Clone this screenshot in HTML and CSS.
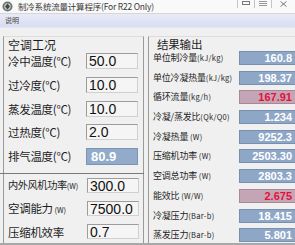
FILE: index.html
```html
<!DOCTYPE html>
<html>
<head>
  <meta charset="utf-8">
  <title>制冷系统流量计算程序</title>
  <link rel="stylesheet" href="styles.css">
</head>
<body>
  <div class="window">
    <header class="titlebar">
      <svg class="appicon" width="11" height="11" viewBox="0 0 11 11">
        <circle cx="5.5" cy="5.5" r="5" fill="#6c7670"/>
        <circle cx="5.5" cy="5.5" r="3.2" fill="#c9d0cc"/>
        <path d="M3 5.5 L5.5 2.5 L8 5.5 L5.5 8.5 Z" fill="#3f4a44"/>
      </svg>
      <span class="title">制冷系统流量计算程序(For R22 Only)</span>
      <div class="controls">
        <span class="ctl"><svg width="8" height="4" viewBox="0 0 8 4"><rect x="0.5" y="0.5" width="7" height="3" fill="none" stroke="#777"/></svg></span>
        <span class="ctl"><svg width="8" height="6" viewBox="0 0 8 6"><path d="M0 0.5H8M0 2.5H8M0 4.5H8" stroke="#999"/></svg></span>
        <span class="ctl close"><svg width="7" height="6" viewBox="0 0 7 6"><path d="M0.5 0.5L6.5 5.5M6.5 0.5L0.5 5.5" stroke="#777"/></svg></span>
      </div>
    </header>
    <nav class="menubar"><span>说明</span></nav>

    <main class="content">
      <div class="leftcol">
        <section class="group cond">
          <h2 class="caption">空调工况</h2>
          <div class="rows">
            <label>冷中温度(℃)</label><div class="input">50.0</div>
            <label>过冷度(℃)</label><div class="input">10.0</div>
            <label>蒸发温度(℃)</label><div class="input">10.0</div>
            <label>过热度(℃)</label><div class="input">2.0</div>
            <label>排气温度(℃)</label><div class="input calc">80.9</div>
          </div>
        </section>
        <section class="group params">
          <div class="rows">
            <label class="tight">内外风机功率<small>(W)</small></label><div class="input">300.0</div>
            <label>空调能力<small> (W)</small></label><div class="input">7500.0</div>
            <label>压缩机效率</label><div class="input">0.7</div>
          </div>
        </section>
      </div>

      <section class="group results">
        <h2 class="caption">结果输出</h2>
        <div class="outrows">
          <label>单位制冷量<small>(kJ/kg)</small></label><div class="out">160.8</div>
          <label>单位冷凝热量<small>(kJ/kg)</small></label><div class="out">198.37</div>
          <label>循环流量<small>(kg/h)</small></label><div class="out warn">167.91</div>
          <label>冷凝/蒸发比<small>(Qk/Q0)</small></label><div class="out">1.234</div>
          <label>冷凝热量 <small>(W)</small></label><div class="out">9252.3</div>
          <label>压缩机功率 <small>(W)</small></label><div class="out">2503.30</div>
          <label>空调总功率 <small>(W)</small></label><div class="out">2803.3</div>
          <label>能效比 <small>(W/W)</small></label><div class="out warn">2.675</div>
          <label>冷凝压力<small>(Bar-b)</small></label><div class="out">18.415</div>
          <label>蒸发压力<small>(Bar-b)</small></label><div class="out">5.801</div>
        </div>
      </section>
    </main>
  </div>
</body>
</html>
```

FILE: styles.css
```css
html, body {
  margin: 0;
  padding: 0;
}
body {
  width: 295px;
  height: 245px;
  overflow: hidden;
  background: #f0f0f0;
  font-family: "Noto Sans CJK SC", "Liberation Sans", sans-serif;
  color: #1e1e1e;
}
.window {
  height: 245px;
  display: flex;
  flex-direction: column;
  border-bottom: 2px solid #a8a8a8;
  box-sizing: border-box;
}

/* title bar */
.titlebar {
  height: 13px;
  display: flex;
  align-items: center;
  background: #f9f9f9;
  border-bottom: 1px solid #d6d6d6;
}
.appicon {
  margin: 0 5px 0 2px;
  flex: none;
}
.title {
  font-size: 8.5px;
  line-height: 13px;
  color: #3a3a3a;
  white-space: nowrap;
  letter-spacing: -0.2px;
}
.controls {
  margin-left: auto;
  display: flex;
  align-self: flex-start;
  height: 8px;
}
.ctl {
  display: flex;
  align-items: flex-start;
  justify-content: center;
  padding-top: 1px;
  width: 16px;
  border-left: 1px solid #c4c4c4;
}
.ctl.close {
  width: 23px;
}

/* menu */
.menubar {
  height: 13px;
  background: linear-gradient(#e8eaf7, #d9ddf1);
  border-bottom: 1px solid #e4e6f2;
  font-size: 7px;
  line-height: 13px;
  padding-left: 5px;
  color: #444;
}

/* layout */
.content {
  flex: 1;
  display: flex;
  gap: 4px;
  padding-top: 8px;
  min-height: 0;
}
.leftcol {
  width: 144px;
  display: flex;
  flex-direction: column;
}
.group {
  box-sizing: border-box;
}
.caption {
  margin: 0;
  font-weight: normal;
  font-size: 12px;
  line-height: 14px;
  height: 14px;
}

/* left groups */
.cond {
  height: 137px;
  margin-left: 3px;
  border-left: 1px solid #9a9a9a;
  border-right: 1px solid #9a9a9a;
  border-top: 1px solid #dcdcdc;
  padding: 1px 0 0 4px;
}
.cond .rows {
  row-gap: 7.8px;
  margin-top: 1px;
}
.params {
  flex: 1;
  border-top: 1px solid #7a7a7a;
  padding: 4px 0 0 8px;
  background: linear-gradient(#9a9a9a, #9a9a9a) 3px 0 / 1px 100% no-repeat,
              linear-gradient(#9a9a9a, #9a9a9a) 143px 0 / 1px 100% no-repeat;
}
.params .rows {
  row-gap: 8px;
  grid-auto-rows: 15px;
  grid-template-columns: 79px 52px;
}
.rows {
  display: grid;
  grid-template-columns: 78px 52px;
  grid-auto-rows: 16px;
  align-items: center;
}
.rows label {
  font-size: 11.5px;
  line-height: 16px;
  white-space: nowrap;
  letter-spacing: -0.3px;
  overflow: hidden;
}
.rows label.tight {
  font-size: 10.2px;
  letter-spacing: -0.4px;
}
.rows small {
  font-size: 7.5px;
  letter-spacing: 0;
}
.input {
  box-sizing: border-box;
  height: 100%;
  background: #f5f5f5;
  border: 1px solid #9c9c9c;
  border-right-color: #d0d0d0;
  border-bottom-color: #d0d0d0;
  font-family: "Liberation Sans", sans-serif;
  font-size: 14px;
  line-height: 14px;
  padding-left: 2px;
  color: #111;
}
.input.calc {
  height: 17px;
  background: #93abca;
  border-color: #7c93b2;
  color: #fff;
  font-weight: bold;
  font-size: 13px;
  line-height: 15px;
  padding-left: 4px;
}

/* results */
.results {
  flex: 1;
  border-left: 1px solid #9a9a9a;
  border-top: 1px solid #dcdcdc;
  padding: 1px 0 0 4px;
}
.results .caption {
  padding-left: 4px;
  letter-spacing: -0.2px;
  height: 13px;
  line-height: 13px;
  font-size: 11.5px;
}
.outrows {
  display: grid;
  grid-template-columns: 86px 1fr;
  grid-auto-rows: 14px;
  row-gap: 5.7px;
  align-items: center;
}
.outrows label {
  font-size: 9px;
  line-height: 14px;
  white-space: nowrap;
  letter-spacing: -0.2px;
}
.outrows small {
  font-size: 7.5px;
  letter-spacing: 0.3px;
}
.out {
  box-sizing: border-box;
  height: 14px;
  background: #8fa7c7;
  border: 1px solid #7890b0;
  border-right: none;
  font-family: "Liberation Sans", sans-serif;
  font-weight: bold;
  font-size: 11px;
  line-height: 12px;
  color: #fff;
  text-align: right;
  padding-right: 3px;
}
.out.warn {
  background: #c3a5b5;
  border-color: #a88898;
  color: #e6103a;
}
```
